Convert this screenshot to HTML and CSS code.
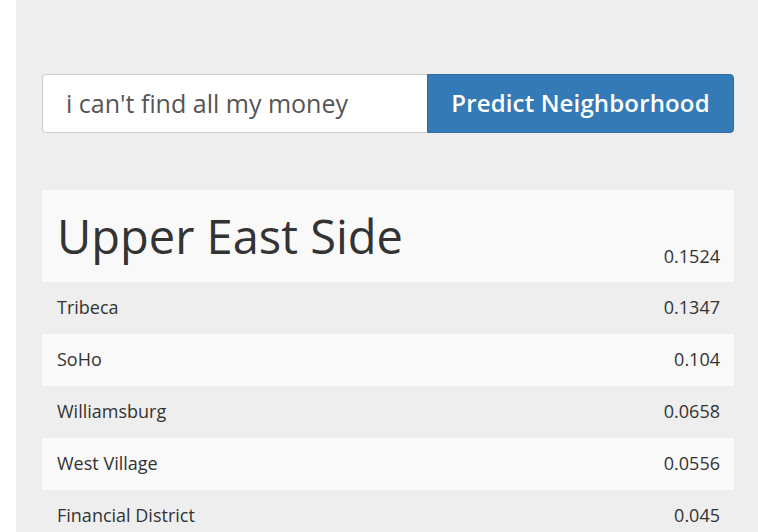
FILE: index.html
```html
<!DOCTYPE html>
<html>
<head>
<meta charset="utf-8">
<link rel="stylesheet" href="styles.css">
</head>
<body>
<div class="page">
  <form class="search">
    <input class="query" type="text" value="i can't find all my money">
    <button class="predict" type="button">Predict Neighborhood</button>
  </form>
  <table class="results">
    <tr class="top odd">
      <td class="name big">Upper East Side</td>
      <td class="score">0.1524</td>
    </tr>
    <tr><td class="name">Tribeca</td><td class="score">0.1347</td></tr>
    <tr class="odd"><td class="name">SoHo</td><td class="score">0.104</td></tr>
    <tr><td class="name">Williamsburg</td><td class="score">0.0658</td></tr>
    <tr class="odd"><td class="name">West Village</td><td class="score">0.0556</td></tr>
    <tr><td class="name">Financial District</td><td class="score">0.045</td></tr>
  </table>
</div>
</body>
</html>
```
FILE: styles.css
```css
html, body {
  margin: 0;
  padding: 0;
  background: #fff;
}
body {
  font-family: "Open Sans", "Liberation Sans", sans-serif;
  color: #333;
}
.page {
  margin-left: 16px;
  min-height: 532px;
  background: #eeeeee;
  padding: 74px 24px 0 26px;
  box-sizing: border-box;
}
.search {
  display: flex;
  height: 59px;
  margin: 0;
}
.query {
  flex: 0 0 385px;
  box-sizing: border-box;
  height: 59px;
  border: 1px solid #cccccc;
  border-right: none;
  border-radius: 4px 0 0 4px;
  padding: 0 23px 2px;
  font-family: "Open Sans", sans-serif;
  font-size: 25px;
  color: #555;
  background: #fff;
  outline: none;
}
.predict {
  flex: 1;
  height: 59px;
  border: 1px solid #2e6da4;
  border-radius: 0 4px 4px 0;
  background: #337ab7;
  color: #fff;
  font-family: "Open Sans", sans-serif;
  font-size: 24px;
  font-weight: 600;
  letter-spacing: 0.15px;
  padding: 0 0 2px;
}
.results {
  margin-top: 57px;
  width: 100%;
  border-collapse: collapse;
}
.results td {
  height: 52px;
  box-sizing: border-box;
  padding: 0 14px 3px 15px;
  font-size: 18px;
  vertical-align: middle;
}
.results tr.odd td {
  background: #f9f9f9;
}
.results tr.top td {
  height: 92px;
  vertical-align: bottom;
  padding-bottom: 14px;
}
.results tr.top td.big {
  font-size: 47px;
  padding-bottom: 18px;
  line-height: 1.2;
}
.score {
  text-align: right;
}
```
